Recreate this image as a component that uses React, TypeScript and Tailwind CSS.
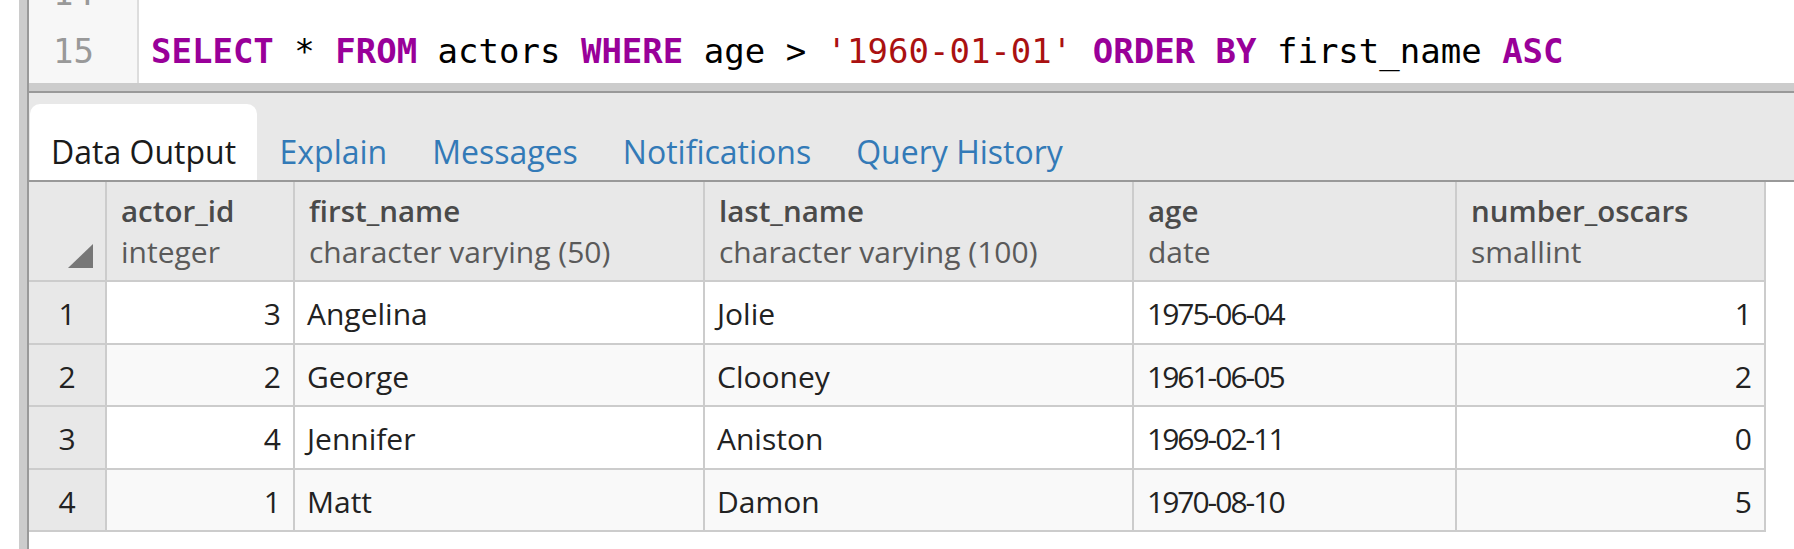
import React from "react";

type Row = {
  actorId: number;
  firstName: string;
  lastName: string;
  age: string;
  oscars: number;
};

const rows: Row[] = [
  { actorId: 3, firstName: "Angelina", lastName: "Jolie", age: "1975-06-04", oscars: 1 },
  { actorId: 2, firstName: "George", lastName: "Clooney", age: "1961-06-05", oscars: 2 },
  { actorId: 4, firstName: "Jennifer", lastName: "Aniston", age: "1969-02-11", oscars: 0 },
  { actorId: 1, firstName: "Matt", lastName: "Damon", age: "1970-08-10", oscars: 5 },
];

const columns = [
  { name: "actor_id", type: "integer" },
  { name: "first_name", type: "character varying (50)" },
  { name: "last_name", type: "character varying (100)" },
  { name: "age", type: "date" },
  { name: "number_oscars", type: "smallint" },
];

const tabs = ["Data Output", "Explain", "Messages", "Notifications", "Query History"];

const gridCols = "grid w-max grid-cols-[78px_188px_410px_429px_323px_309px]";

const Kw = ({ children }: { children: React.ReactNode }) => (
  <span className="font-bold text-[#990099]">{children}</span>
);

const QueryEditor = () => (
  <div className="flex h-[83px] overflow-hidden bg-white font-['DejaVu_Sans_Mono',monospace] text-[34px]">
    {/* gutter */}
    <div className="w-[110px] shrink-0 border-r-2 border-[#dddddd] bg-[#f7f7f7] text-[#999999]">
      <div className="-mt-[36px] pr-[43px] text-right">
        <div className="h-[58px] leading-[58px]">14</div>
        <div className="h-[58px] leading-[58px]">15</div>
      </div>
    </div>
    <div className="flex-1 pl-[12px] text-black">
      <div className="-mt-[36px]">
        <div className="h-[58px] leading-[58px]"> </div>
        <div className="h-[58px] whitespace-pre leading-[58px]">
          <Kw>SELECT</Kw> * <Kw>FROM</Kw> actors <Kw>WHERE</Kw> age {">"}{" "}
          <span className="text-[#aa1111]">'1960-01-01'</span> <Kw>ORDER BY</Kw> first_name <Kw>ASC</Kw>
        </div>
      </div>
    </div>
  </div>
);

const TabStrip = () => (
  <div className="flex h-[87px] items-end bg-[#e8e8e8] pl-px font-['Open_Sans',sans-serif] text-[32px]">
    {tabs.map((tab, i) =>
      i === 0 ? (
        <div key={tab} className="flex h-[76px] items-end rounded-t-[10px] bg-white px-[21px] pb-[4px] text-[#1a1a1a]">
          {tab}
        </div>
      ) : (
        <div key={tab} className="flex h-[76px] items-end px-[22.5px] pb-[4px] text-[#337ab7]">
          {tab}
        </div>
      )
    )}
  </div>
);

const cell = "flex items-center border-r-2 border-b-2 border-[#cccccc] pt-[3px]";

const ResultGrid = () => (
  <div className="font-['Open_Sans',sans-serif] text-[30px]">
    <div className={`${gridCols} h-[100px] bg-[#e8e8e8]`}>
      <div className="relative border-r-2 border-b-2 border-[#cccccc]">
        <svg className="absolute right-[12px] bottom-[12px]" width="25" height="24" viewBox="0 0 25 24">
          <polygon points="25,0 25,24 0,24" fill="#777777" />
        </svg>
      </div>
      {columns.map((c) => (
        <div key={c.name} className="flex flex-col justify-center border-r-2 border-b-2 border-[#cccccc] pl-[14px] leading-[41px]">
          <span className="text-[29.5px] font-semibold text-[#4a4a4a]">{c.name}</span>
          <span className="text-[#5a5a5a]">{c.type}</span>
        </div>
      ))}
    </div>
    {rows.map((r, i) => (
      <div key={i} className={`${gridCols} h-[62.5px] text-[#222222] ${i % 2 === 1 ? "bg-[#f9f9f9]" : "bg-white"}`}>
        <div className={`${cell} justify-center bg-[#e8e8e8]`}>{i + 1}</div>
        <div className={`${cell} justify-end pr-[12px]`}>{r.actorId}</div>
        <div className={`${cell} pl-[12px]`}>{r.firstName}</div>
        <div className={`${cell} pl-[12px]`}>{r.lastName}</div>
        <div className={`${cell} pl-[13px] tracking-[-2px]`}>{r.age}</div>
        <div className={`${cell} justify-end pr-[12px]`}>{r.oscars}</div>
      </div>
    ))}
  </div>
);

export default function App() {
  return (
    <div className="flex h-[549px] w-[1794px] overflow-hidden bg-white">
      <div className="w-[19px] shrink-0 bg-white" />
      <div className="w-[8px] shrink-0 bg-[#cccccc]" />
      <div className="w-[2px] shrink-0 bg-[#999999]" />
      <div className="flex min-w-0 flex-1 flex-col">
        <QueryEditor />
        <div className="h-[8px] bg-[#cccccc]" />
        <div className="h-[2px] bg-[#999999]" />
        <TabStrip />
        <div className="h-[2px] bg-[#999999]" />
        <ResultGrid />
      </div>
    </div>
  );
}
